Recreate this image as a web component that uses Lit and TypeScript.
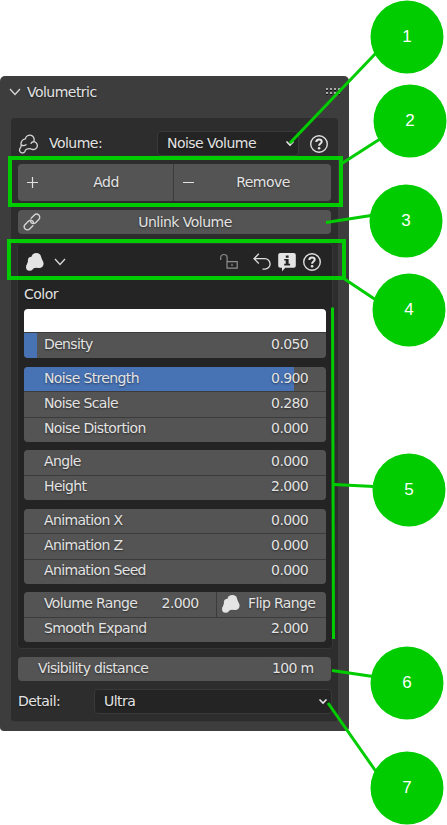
import { LitElement, html, css, svg, nothing } from "lit";
import { customElement, property } from "lit/decorators.js";

const icons: Record<string, unknown> = {
  chevron: svg`<path d="M5 7l5 5.500 5-5.500" fill="none" stroke="#d8d8d8" stroke-width="1.300"/>`,
  small: svg`<path d="M6.500 8.500l3.500 3.500 3.500-3.500" fill="none" stroke="#e6e6e6" stroke-width="1.600"/>`,
  blob: svg`<g fill="#e4e4e4"><circle cx="11.300" cy="5.800" r="4.900"/><circle cx="6.600" cy="8.400" r="3.700"/><circle cx="14.400" cy="11.800" r="4.200"/><circle cx="4.600" cy="15.200" r="3.500"/><path d="M3 9.300L1.200 14.200 7.600 17.200Q9 15.600 13.400 15.900L18 9.700 16 5 12 4z"/></g>`,
  cloud: svg`<path d="M7.400 4.900A4.400 4.400 0 1 1 15.600 7.700A3.900 3.900 0 1 1 14.200 15.300Q12 14.300 9.600 14.800Q7.800 15 7.300 16.500A2.900 2.900 0 1 1 2.200 14.200Q3.200 13 3.200 11.200C2.400 8.200 4.300 5.100 7.400 4.900zM3.700 11.200Q6 12.400 8 10.700M15.600 7.700Q13.900 7.900 13 9.300" fill="none" stroke="#d6d6d6" stroke-width="1.300" stroke-linecap="round"/>`,
  help: svg`<circle cx="10" cy="10" r="8.300" fill="none" stroke="#dedede" stroke-width="1.400"/><path d="M7.300 8c0-1.600 1.100-2.600 2.700-2.600s2.700.9 2.700 2.300c0 1.900-2.600 1.900-2.600 4.100" fill="none" stroke="#e6e6e6" stroke-width="2"/><circle cx="10.100" cy="14.300" r="1.300" fill="#e6e6e6"/>`,
  plus: svg`<path d="M9.500 4v11M4 9.500h11" stroke="#e2e2e2" stroke-width="1.200"/>`,
  minus: svg`<path d="M4 9.500h11" stroke="#e2e2e2" stroke-width="1.200"/>`,
  link: svg`<g transform="translate(-1 0) rotate(-45 10 10)" fill="none" stroke="#d4d4d4" stroke-width="1.400" stroke-linecap="round"><path d="M8 13.200H3.400a3.100 3.100 0 0 1 0-6.200h4.500a3.100 3.100 0 0 1 3.100 3.100q0 .8-.4 1.400"/><path d="M12 6.800h4.600a3.100 3.100 0 0 1 0 6.200h-4.500a3.100 3.100 0 0 1-3.100-3.100q0-.8.4-1.400"/></g>`,
  unlock: svg`<path d="M1.700 8V5.700a3.200 3.200 0 0 1 6.400 0V9.500M8 9.600h10.200v6.600H8zM13 11.700v2.300" fill="none" stroke="#8d8d8d" stroke-width="1.200"/>`,
  undo: svg`<path d="M6.800 1.700L2 6.700l4.800 4.800M2.300 6.700h10.600a5.200 5.200 0 0 1 0 10.400H10.500" fill="none" stroke="#dedede" stroke-width="1.300"/>`,
  info: svg`<path d="M3.200 1h13.600a2 2 0 0 1 2 2v10.800a2 2 0 0 1-2 2H8.300L5 19.200v-3.400H3.200a2 2 0 0 1-2-2V3a2 2 0 0 1 2-2z" fill="#e4e4e4"/><path d="M8.800 3.500h2.800v2.300H8.800zM7.200 6.900h4.400v4.900h1.500v1.700H7.200v-1.700h1.500V8.600H7.200z" fill="#242424"/>`,
};

@customElement("ui-icon")
class UiIcon extends LitElement {
  @property() name = "";
  static styles = css`
    :host { display: block; width: 20px; height: 20px; flex: none; }
    svg { display: block; }
  `;
  render() {
    return html`<svg width="20" height="20" viewBox="0 0 20 20">${icons[this.name]}</svg>`;
  }
}

@customElement("value-row")
class ValueRow extends LitElement {
  @property() label = "";
  @property() value = "";
  @property({ type: Number }) fill = 0;
  static styles = css`
    :host { display: block; flex: 1; min-width: 0; background: #545454; letter-spacing: -0.64px; }
    .row { display: flex; align-items: center; justify-content: space-between; height: 100%; box-sizing: border-box; padding: 0 17.5px 3px 20px; }
  `;
  render() {
    const bg = this.fill ? `background:linear-gradient(90deg,#4772b3 ${this.fill}px,transparent ${this.fill}px)` : nothing;
    return html`<div class="row" style=${bg}><span>${this.label}</span><span>${this.value}</span></div>`;
  }
}

const callouts = [
  { n: 1, x: 407, y: 37, line: [290, 143, 376, 53] },
  { n: 2, x: 410, y: 121, line: [341, 164, 380, 139] },
  { n: 3, x: 406, y: 221, line: [326, 222.5, 371, 215.5] },
  { n: 4, x: 409, y: 310, line: [343, 278, 376, 300] },
  { n: 5, x: 409, y: 490, line: [334, 484.5, 374, 486.500] },
  { n: 6, x: 407, y: 683, line: [332, 670.5, 373, 676.5] },
  { n: 7, x: 407, y: 788, line: [328, 703, 376, 771.500] },
];

@customElement("app-root")
class AppRoot extends LitElement {
  static styles = css`
    :host { display: block; position: relative; width: 447px; height: 825px; overflow: hidden; background: #fff; box-sizing: border-box; padding-top: 76px;
      font: 14px/18px "DejaVu Sans", sans-serif; letter-spacing: -0.53px; color: #e3e3e3; white-space: nowrap; text-shadow: 0 1px 2px rgba(0,0,0,.5); }
    .panel { width: 349px; height: 655px; box-sizing: border-box; background: #3d3d3d; border-radius: 5px 5px 4px 4px; padding: 0 11px; }
    .title { display: flex; align-items: center; height: 42px; margin-left: -6px; }
    .title span { margin: -10px 0 0 2px; flex: 1; }
    .title ui-icon { margin-top: -10px; }
    .grip { display: grid; grid-template-columns: repeat(4, 2px); gap: 2px; margin: -12px -2px 0 0; }
    .grip i { width: 2px; height: 2px; background: #aaa; box-shadow: 0 1px #111; }
    .body { height: 604px; box-sizing: border-box; background: #2d2d2d; border-radius: 4px; border-bottom: 1px solid #393939; padding: 13px 6px 0 7px; }
    .line { display: flex; align-items: center; }
    .select { box-sizing: border-box; background: #242424; border: 1px solid #393939; border-radius: 4px; height: 25px; display: flex; align-items: center; justify-content: space-between; padding: 0 0 1px 9px; }
    .select ui-icon { margin-right: -2px; }
    .volume { height: 25px; }
    .volume > span { width: 108px; margin: -2px 0 0 11px; }
    .volume .select { width: 142px; }
    .volume .help { margin-left: 10px; }
    .pair { display: flex; gap: 1px; background: #3b3b3b; border-radius: 4px; overflow: hidden; width: 313px; height: 37px; margin-top: 8px; }
    .button { flex: 1; background: #545454; display: flex; align-items: center; padding: 0 5px; }
    .button span { flex: 1; text-align: center; margin: -1px 0 0 1px; }
    .pair .button:first-child { flex: 0 0 145px; }
    .single { height: 24px; width: 303px; border-radius: 4px; margin-top: 9px; }
    .settings { box-sizing: border-box; background: #242424; border: 1px solid #363636; border-radius: 4px; width: 316px; height: 406px; margin: 9px 0 0 -1px; padding: 8px 6px 0; }
    .tools { gap: 5px; height: 20px; padding: 0 4px 0 1px; }
    .tools .gap { flex: 1; }
    .tools .lock { margin-right: 8px; }
    .color { height: 18px; margin: 13px 0 6px; }
    .group { display: flex; flex-direction: column; gap: 1px; background: #3b3b3b; border-radius: 4px; overflow: hidden; margin-bottom: 8px; width: 301.5px; }
    .swatch { background: #fff; height: 23px; }
    .two { height: 50px; margin-bottom: 9px; } .three { height: 75px; } .first { height: 49px; margin-bottom: 9px; }
    .range { display: flex; gap: 1px; flex: 1; }
    .range value-row { flex: 0 0 192px; }
    .flip { flex: 1; background: #545454; display: flex; align-items: center; gap: 7px; padding-left: 4px; letter-spacing: -.64px; }
    .flip span { margin-top: -2px; }
    .visibility { display: flex; height: 24px; width: 313px; border-radius: 4px; overflow: hidden; margin-top: 8px; }
    .detail { margin-top: 8px; }
    .detail > span { width: 76px; margin-top: -1px; }
    .detail .select { width: 238px; }
    .marks { position: absolute; inset: 0; display: block; }
    .badge { position: absolute; width: 73px; height: 73px; border-radius: 50%; background: #00cc00; color: #fff; display: flex; align-items: center; justify-content: center; transform: translate(-50%, -50%); font: 17px "Liberation Sans", sans-serif; letter-spacing: 0; text-shadow: none; box-sizing: border-box; padding-bottom: 2px; }
  `;
  render() {
    return html`
      <div class="panel">
        <div class="title"><ui-icon name="chevron"></ui-icon><span>Volumetric</span>
          <div class="grip">${Array.from({ length: 8 }, () => html`<i></i>`)}</div></div>
        <div class="body">
          <div class="line volume"><ui-icon name="cloud"></ui-icon><span>Volume:</span>
            <div class="select">Noise Volume<ui-icon name="small"></ui-icon></div>
            <ui-icon class="help" name="help"></ui-icon></div>
          <div class="pair">
            <div class="button"><ui-icon name="plus"></ui-icon><span>Add</span></div>
            <div class="button"><ui-icon name="minus"></ui-icon><span>Remove</span></div>
          </div>
          <div class="button single"><ui-icon name="link"></ui-icon><span>Unlink Volume</span></div>
          <div class="settings">
            <div class="line tools">
              <ui-icon name="blob"></ui-icon><ui-icon name="chevron"></ui-icon><div class="gap"></div>
              <ui-icon class="lock" name="unlock"></ui-icon><ui-icon name="undo"></ui-icon>
              <ui-icon name="info"></ui-icon><ui-icon name="help"></ui-icon>
            </div>
            <div class="color">Color</div>
            <div class="group first"><div class="swatch"></div>
              <value-row label="Density" value="0.050" .fill=${13}></value-row></div>
            <div class="group three">
              <value-row label="Noise Strength" value="0.900" .fill=${270}></value-row>
              <value-row label="Noise Scale" value="0.280"></value-row>
              <value-row label="Noise Distortion" value="0.000"></value-row></div>
            <div class="group two">
              <value-row label="Angle" value="0.000"></value-row>
              <value-row label="Height" value="2.000"></value-row></div>
            <div class="group three">
              <value-row label="Animation X" value="0.000"></value-row>
              <value-row label="Animation Z" value="0.000"></value-row>
              <value-row label="Animation Seed" value="0.000"></value-row></div>
            <div class="group two">
              <div class="range"><value-row label="Volume Range" value="2.000"></value-row>
                <div class="flip"><ui-icon name="blob"></ui-icon><span>Flip Range</span></div></div>
              <value-row label="Smooth Expand" value="2.000"></value-row></div>
          </div>
          <div class="visibility"><value-row label="Visibility distance" value="100 m"></value-row></div>
          <div class="line detail"><span>Detail:</span><div class="select">Ultra<ui-icon name="small"></ui-icon></div></div>
        </div>
      </div>
      <svg class="marks" width="447" height="825" fill="none" stroke="#00cc00">
        <rect x="10" y="158" width="331" height="47" stroke-width="4"/>
        <rect x="9" y="241" width="335" height="37" stroke-width="4"/>
        <path d="M332.500 307.500L333.500 639" stroke-width="3"/>
        ${callouts.map(({ line: l }) => svg`<line x1=${l[0]} y1=${l[1]} x2=${l[2]} y2=${l[3]} stroke-width="3"/>`)}
      </svg>
      ${callouts.map((c) => html`<div class="badge" style="left:${c.x}px;top:${c.y}px">${c.n}</div>`)}
    `;
  }
}
